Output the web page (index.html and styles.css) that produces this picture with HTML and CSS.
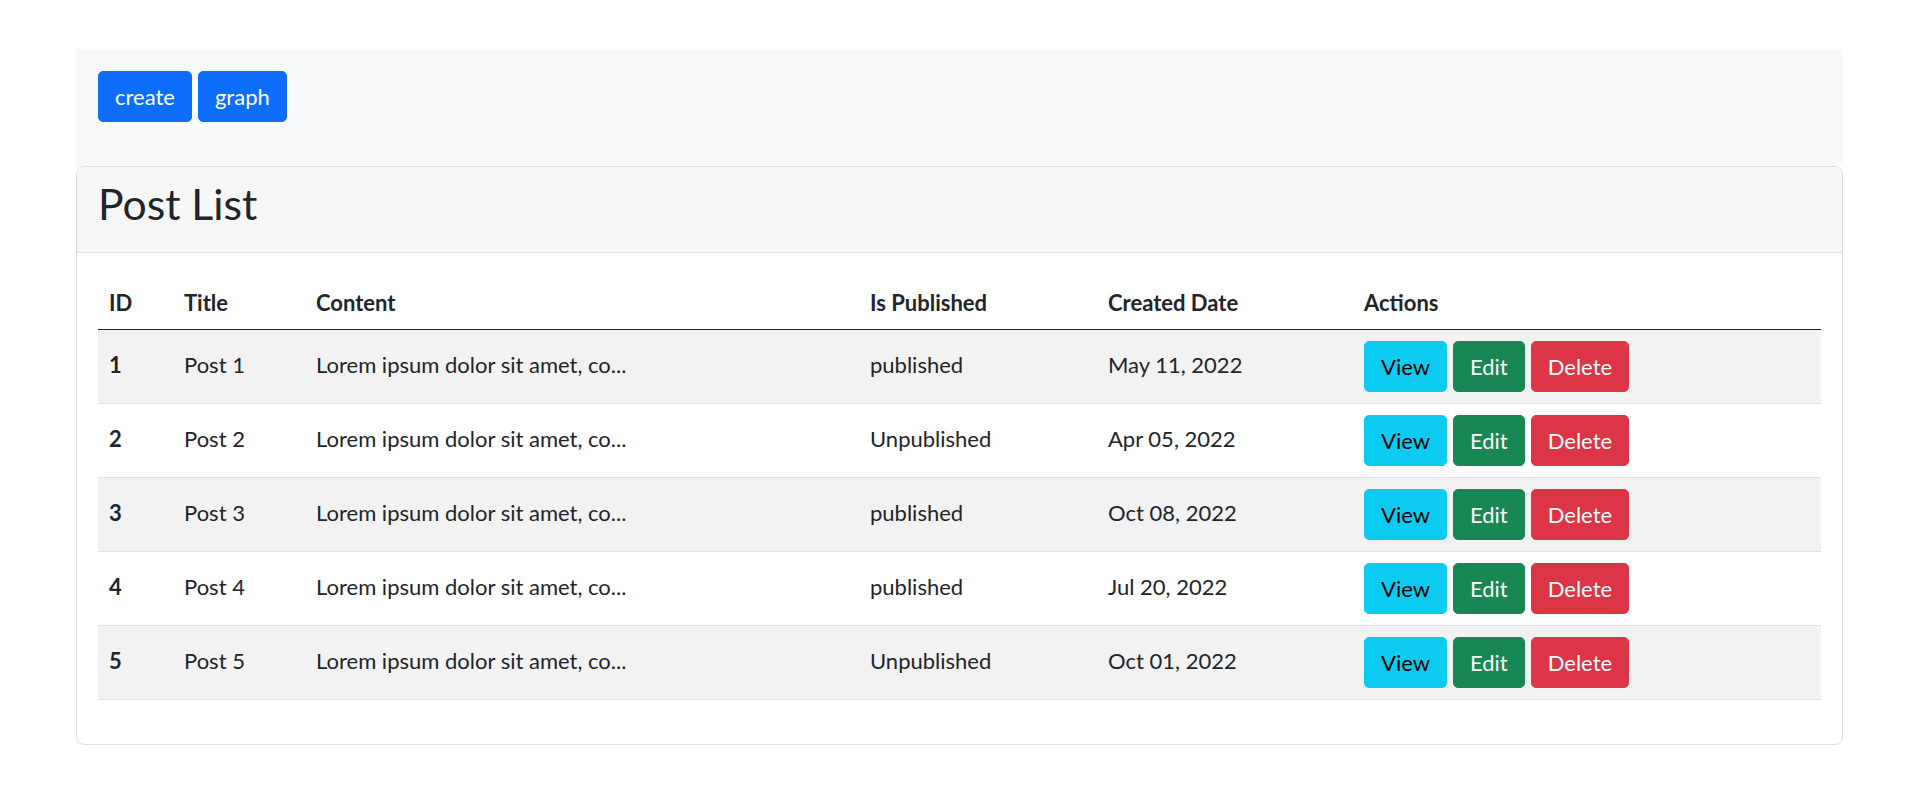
FILE: index.html
```html
<!DOCTYPE html>
<html lang="en">
<head>
<meta charset="utf-8">
<title>Post List</title>
<link rel="stylesheet" href="styles.css">
</head>
<body>
<div class="page">
  <nav class="navbar">
    <a class="btn btn-primary" href="#">create</a>
    <a class="btn btn-primary" href="#">graph</a>
  </nav>
  <div class="card">
    <div class="card-header">
      <h2 class="title">Post List</h2>
    </div>
    <div class="card-body">
      <table class="table">
        <colgroup>
          <col class="c-id"><col class="c-title"><col class="c-content"><col class="c-pub"><col class="c-date"><col class="c-act">
        </colgroup>
        <thead>
          <tr><th>ID</th><th>Title</th><th>Content</th><th>Is Published</th><th>Created Date</th><th>Actions</th></tr>
        </thead>
        <tbody>
          <tr class="odd"><th>1</th><td>Post 1</td><td>Lorem ipsum dolor sit amet, co...</td><td>published</td><td>May 11, 2022</td>
            <td class="act"><div class="actions"><a class="btn btn-info" href="#">View</a><a class="btn btn-success" href="#">Edit</a><a class="btn btn-danger" href="#">Delete</a></div></td></tr>
          <tr><th>2</th><td>Post 2</td><td>Lorem ipsum dolor sit amet, co...</td><td>Unpublished</td><td>Apr 05, 2022</td>
            <td class="act"><div class="actions"><a class="btn btn-info" href="#">View</a><a class="btn btn-success" href="#">Edit</a><a class="btn btn-danger" href="#">Delete</a></div></td></tr>
          <tr class="odd"><th>3</th><td>Post 3</td><td>Lorem ipsum dolor sit amet, co...</td><td>published</td><td>Oct 08, 2022</td>
            <td class="act"><div class="actions"><a class="btn btn-info" href="#">View</a><a class="btn btn-success" href="#">Edit</a><a class="btn btn-danger" href="#">Delete</a></div></td></tr>
          <tr><th>4</th><td>Post 4</td><td>Lorem ipsum dolor sit amet, co...</td><td>published</td><td>Jul 20, 2022</td>
            <td class="act"><div class="actions"><a class="btn btn-info" href="#">View</a><a class="btn btn-success" href="#">Edit</a><a class="btn btn-danger" href="#">Delete</a></div></td></tr>
          <tr class="odd"><th>5</th><td>Post 5</td><td>Lorem ipsum dolor sit amet, co...</td><td>Unpublished</td><td>Oct 01, 2022</td>
            <td class="act"><div class="actions"><a class="btn btn-info" href="#">View</a><a class="btn btn-success" href="#">Edit</a><a class="btn btn-danger" href="#">Delete</a></div></td></tr>
        </tbody>
      </table>
    </div>
  </div>
</div>
</body>
</html>
```

FILE: styles.css
```css
* { box-sizing: border-box; }
html, body {
  margin: 0;
  padding: 0;
  background: #fff;
}
body {
  font-family: "Lato", "Liberation Sans", sans-serif;
  font-size: 22px;
  line-height: 33px;
  color: #212529;
}
.page {
  padding: 49px 77px 0 76px;
}
.navbar {
  background: #f8f9fa;
  padding: 22px 22px 44px 22px;
  display: flex;
  gap: 6px;
}
.btn {
  display: inline-block;
  text-decoration: none;
  padding: 8px 16px;
  border: 1px solid transparent;
  border-radius: 5px;
  font-size: 22px;
  line-height: 33px;
  text-align: center;
  white-space: nowrap;
}
.btn-primary { background: #0d6efd; border-color: #0d6efd; color: #fff; }
.btn-info { background: #0dcaf0; border-color: #0dcaf0; color: #000; }
.btn-success { background: #198754; border-color: #198754; color: #fff; }
.btn-danger { background: #dc3545; border-color: #dc3545; color: #fff; }
.card {
  border: 1px solid #dfdfdf;
  border-radius: 8px;
  background: #fff;
}
.card-header {
  background: #f7f7f7;
  border-bottom: 1px solid #dfdfdf;
  padding: 11px 21px 12px 21px;
  border-radius: 7px 7px 0 0;
}
.title {
  margin: 0 0 11px 0;
  font-size: 42.67px;
  font-weight: 400;
  line-height: 51px;
}
.card-body {
  padding: 22px 21px 22px 21px;
}
.table {
  width: 100%;
  border-collapse: collapse;
  margin-bottom: 22px;
  table-layout: fixed;
}
.c-id { width: 75px; }
.c-title { width: 132px; }
.c-content { width: 554px; }
.c-pub { width: 238px; }
.c-date { width: 256px; }
.table th, .table td {
  text-align: left;
  vertical-align: middle;
  border-bottom: 1px solid #dee2e6;
}
.table th { font-weight: 700; }
.table thead th {
  padding: 11px 11px 10px 11px;
  border-bottom: 1px solid #212529;
}
.table tbody td, .table tbody th {
  padding: 11px 11px 15px 11px;
}
.table tbody td.act {
  padding: 11px;
}
.table tr.odd th, .table tr.odd td {
  background: #f2f2f2;
}
.actions {
  display: flex;
  gap: 6px;
}
```
